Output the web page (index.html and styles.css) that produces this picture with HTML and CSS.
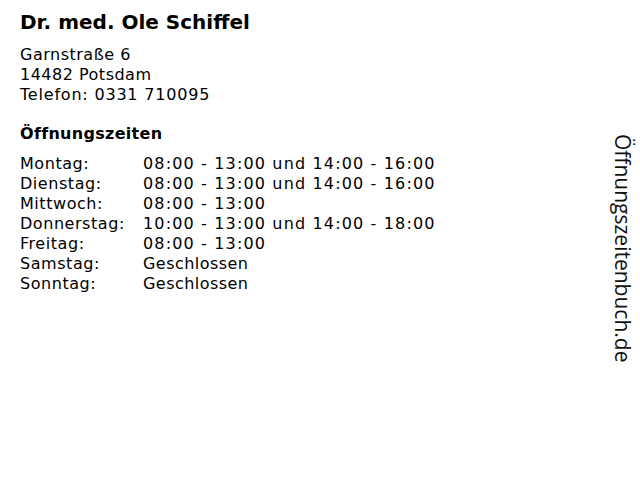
FILE: index.html
```html
<!DOCTYPE html>
<html lang="de">
<head>
<meta charset="utf-8">
<link rel="stylesheet" href="styles.css">
</head>
<body>
<div class="page">
  <main class="content">
    <h1 class="title">Dr. med. Ole Schiffel</h1>
    <p class="address">Garnstraße 6<br>14482 Potsdam<br><span class="phone">Telefon: 0331 710095</span></p>
    <h2 class="heading">Öffnungszeiten</h2>
    <div class="hours">
      <span>Montag:</span><span class="time">08:00 - 13:00 und 14:00 - 16:00</span>
      <span>Dienstag:</span><span class="time">08:00 - 13:00 und 14:00 - 16:00</span>
      <span>Mittwoch:</span><span class="time">08:00 - 13:00</span>
      <span>Donnerstag:</span><span class="time">10:00 - 13:00 und 14:00 - 18:00</span>
      <span>Freitag:</span><span class="time">08:00 - 13:00</span>
      <span>Samstag:</span><span class="closed">Geschlossen</span>
      <span>Sonntag:</span><span class="closed">Geschlossen</span>
    </div>
  </main>
  <aside class="brand">Öffnungszeitenbuch.de</aside>
</div>
</body>
</html>
```

FILE: styles.css
```css
html, body {
  margin: 0;
  padding: 0;
  background: #fff;
}
.page {
  width: 640px;
  height: 480px;
  display: flex;
  justify-content: space-between;
  color: #000;
  font-family: "DejaVu Sans", Verdana, sans-serif;
}
.content {
  padding: 8px 0 0 20px;
}
.title {
  margin: 0;
  font-size: 20px;
  line-height: 28px;
  font-weight: bold;
}
.address {
  margin: 9px 0 0;
  font-size: 16px;
  line-height: 20px;
  letter-spacing: 0.5px;
}
.phone {
  letter-spacing: 0.8px;
}
.heading {
  margin: 19px 0 0;
  font-size: 16px;
  line-height: 20px;
  font-weight: bold;
  letter-spacing: 0.3px;
}
.hours {
  margin-top: 10px;
  display: grid;
  grid-template-columns: 123px auto;
  font-size: 16px;
  line-height: 20px;
  letter-spacing: 0.55px;
}
.time {
  letter-spacing: 1.15px;
}
.closed {
  letter-spacing: 0.45px;
}
.brand {
  writing-mode: vertical-rl;
  font-family: "Open Sans", "Liberation Sans", sans-serif;
  font-size: 21px;
  line-height: 24px;
  color: #111;
  margin: 134px 5px 0 0;
  align-self: flex-start;
}
```
